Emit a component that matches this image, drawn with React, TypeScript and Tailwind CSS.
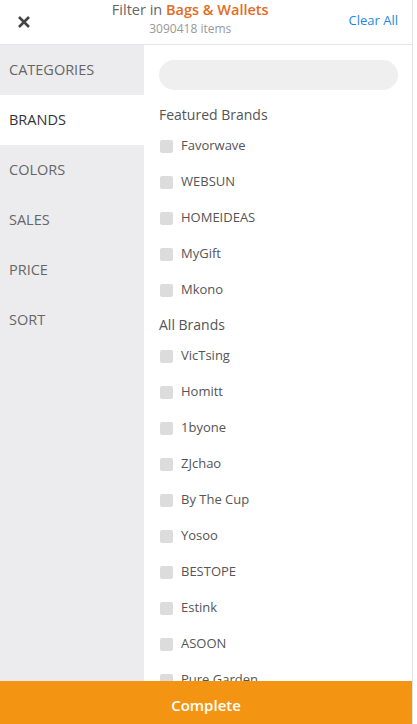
import React from "react";

const featured = ["Favorwave", "WEBSUN", "HOMEIDEAS", "MyGift", "Mkono"];
const all = ["VicTsing", "Homitt", "1byone", "ZJchao", "By The Cup", "Yosoo", "BESTOPE", "Estink", "ASOON", "Pure Garden"];
const tabs = ["CATEGORIES", "BRANDS", "COLORS", "SALES", "PRICE", "SORT"];

function Item({ name }: { name: string }) {
  return (
    <div className="flex h-[36px] items-center">
      <span className="ml-px h-[13px] w-[13px] rounded-[2px] bg-[#dcdcdc]" />
      <span className="ml-[8px] text-[13px] text-[#555]">{name}</span>
    </div>
  );
}

export default function App() {
  return (
    <div className="flex h-[724px] w-[417px] overflow-hidden bg-white" style={{ fontFamily: '"Open Sans", sans-serif' }}>
      <div className="flex w-[413px] flex-col border-r border-[#e2e2e2]">
        <div className="flex h-[45px] shrink-0 items-center border-b border-[#e6e6e6] px-[14px]">
          <svg width="16" height="16" viewBox="0 0 16 16" className="ml-[2px]">
            <path d="M3 3 L13 13 M13 3 L3 13" stroke="#444" strokeWidth="2.6" strokeLinecap="butt" />
          </svg>
          <div className="flex flex-1 flex-col items-center self-start">
            <div className="text-[14.5px] leading-[20px] text-[#666]">
              Filter in <span className="font-semibold text-[#e46c1e]">Bags &amp; Wallets</span>
            </div>
            <div className="text-[12px] leading-[18px] text-[#999]">3090418 items</div>
          </div>
          <div className="-mt-[2px] text-[13px] text-[#1e88e5]">Clear All</div>
        </div>
        <div className="flex min-h-0 flex-1">
          <div className="w-[144px] shrink-0 bg-[#ececee]">
            {tabs.map((t) => (
              <div key={t} className={`flex h-[50px] items-center pb-[1px] pl-[9px] text-[14.5px] ${t === "BRANDS" ? "bg-white text-[#333]" : "text-[#666]"}`}>
                {t}
              </div>
            ))}
          </div>
          <div className="min-w-0 flex-1 overflow-hidden pl-[15px] pr-[14px] pt-[15px]">
            <div className="h-[30px] rounded-full bg-[#efefef]" />
            <div className="mt-[14px] text-[14px] leading-[21px] text-[#555]">Featured Brands</div>
            <div className="mt-[3px]">
              {featured.map((b) => (
                <Item key={b} name={b} />
              ))}
            </div>
            <div className="mt-[6px] text-[14px] leading-[21px] text-[#555]">All Brands</div>
            <div className="mt-[3px]">
              {all.map((b) => (
                <Item key={b} name={b} />
              ))}
            </div>
          </div>
        </div>
        <div className="flex h-[43px] shrink-0 items-center justify-center bg-[#f39512] pt-[6px] text-[15px] font-semibold text-white">
          Complete
        </div>
      </div>
    </div>
  );
}
